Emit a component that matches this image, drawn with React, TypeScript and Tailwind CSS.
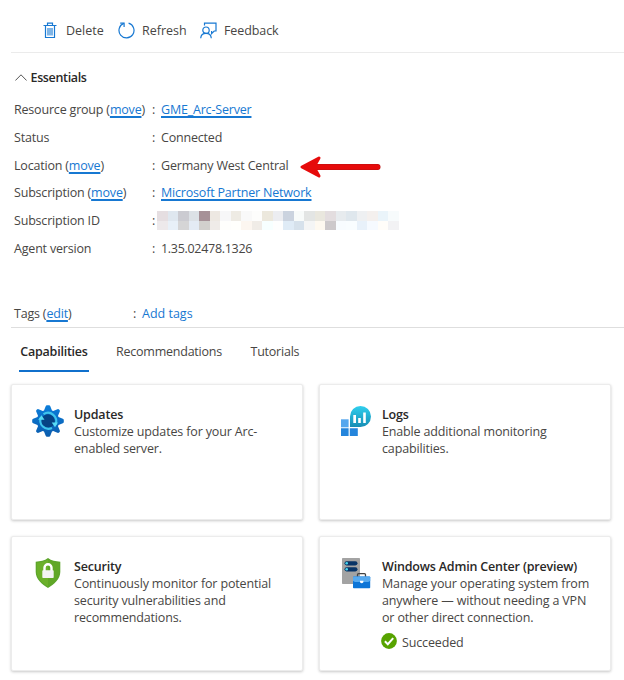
import React from 'react';

const mosaic = [
  ['#e5dee1', '#dfe7ef', '#cbcbd1', '#dce1e6', '#a69197', '#ede8e2', '#f7f7f8', '#eeebe4', '#f9f9f9', '#fdfdfc', '#ece8dd', '#ecedf1', '#cbd3df', '#f8fbfa', '#e3e5e4', '#e9e7de', '#e3dddf', '#e7ebee', '#dfe7ed', '#eef0f2', '#f4f0ee', '#eaf4fa', '#f7fbfc'],
  ['#ede9eb', '#e8f0f8', '#d5d5d6', '#e4ebf4', '#d2d0cd', '#efebe8', '#fefefc', '#fffffc', '#fcf6f0', '#f0ece7', '#f7ffff', '#fefefe', '#dfebf6', '#d6e1eb', '#f4f5f5', '#fef9f0', '#cdc9cb', '#f8fcff', '#f9fdff', '#e8f1fa', '#f6faff', '#fffdf9', '#f2f2f4'],
];

function Link({ children }: { children: React.ReactNode }) {
  return <a className="text-[#1778d2] underline decoration-[1.5px] underline-offset-2 [text-decoration-skip-ink:none]">{children}</a>;
}

interface RowProps {
  label: string;
  action?: string;
  children: React.ReactNode;
}

function Row({ label, action, children }: RowProps) {
  return (
    <div className="flex h-[27.7px] items-center">
      <div className="w-[138px]">
        {label}
        {action && <> (<Link>{action}</Link>)</>}
      </div>
      <div className="w-[9px]">:</div>
      {children}
    </div>
  );
}

function TrashIcon() {
  return (
    <svg width="14" height="17" viewBox="0 0 14 17" fill="none" stroke="#1778d2">
      <path d="M.5 3.5h13M4.5 3V1.2h5V3M2.5 3.5v12h9v-12" strokeWidth="1.2" />
      <path d="M5 6v7.5M7 6v7.5M9 6v7.5" strokeWidth="1.1" />
    </svg>
  );
}

function RefreshIcon() {
  return (
    <svg width="17" height="17" viewBox="0 0 17 17" fill="none" stroke="#1778d2" strokeWidth="1.2">
      <path d="M10.6 1.2A7.5 7.5 0 1 1 5.8 1.4" />
      <path d="M2.2 1.2h3.900v3.900" />
    </svg>
  );
}

function FeedbackIcon() {
  return (
    <svg width="18" height="17" viewBox="0 0 18 17" fill="none" stroke="#1778d2" strokeWidth="1.2">
      <path d="M4.500 3.500V1.200h11.500v7.800h-1.800l-2.600 2.600V9" />
      <circle cx="6" cy="8.200" r="3.200" />
      <path d="M.7 16.300c.2-3.100 2.300-4.900 5.300-4.900s5.100 1.800 5.300 4.900" />
    </svg>
  );
}

function UpdatesIcon() {
  return (
    <svg width="32" height="32" viewBox="0 0 32 32">
      <defs>
        <linearGradient id="gear" x1="0" y1="0" x2="0" y2="32" gradientUnits="userSpaceOnUse">
          <stop offset="0" stopColor="#0c7edb" />
          <stop offset="1" stopColor="#0b5cad" />
        </linearGradient>
      </defs>
      <path
        fill="url(#gear)"
        d="M12 5.500l1.700-4.300Q14 .2 15 .2h2q1 0 1.300 1L20 5.500l1.200.5 4.200-1.800q1-.4 1.700.3l.4.400q.7.700.3 1.700L26 10.800l.5 1.200 4.300 1.700q1 .3 1 1.300v2q0 1-1 1.300L26.500 20l-.5 1.200 1.800 4.200q.4 1-.3 1.700l-.4.400q-.7.700-1.700.3L21.200 26l-1.200.5-1.700 4.300q-.3 1-1.300 1h-2q-1 0-1.300-1L12 26.500l-1.200-.5-4.200 1.800q-1 .4-1.700-.3l-.4-.4q-.7-.7-.3-1.700L6 21.200 5.500 20l-4.300-1.700q-1-.3-1-1.300v-2q0-1 1-1.300L5.500 12l.5-1.200-1.800-4.200q-.4-1 .3-1.700l.4-.4q.7-.7 1.700-.3L10.800 6z"
      />
      <circle cx="16" cy="16" r="6.800" fill="#064384" />
      <g fill="none" stroke="#3fc5ec" strokeWidth="2.100">
        <path d="M20 23A8.200 8.200 0 0 1 8.900 12.500" />
        <path d="M11.500 9.200A8.200 8.200 0 0 1 23.400 19.500" />
      </g>
      <path d="M6.200 14.800l3.300-4.600 3 4.600zM19.700 17.600l3.300 4.600 3-4.600z" fill="#58dcf5" />
    </svg>
  );
}

function LogsIcon() {
  return (
    <svg width="32" height="32" viewBox="0 0 32 32">
      <defs>
        <linearGradient id="bubble" x1="0" y1="0" x2="0" y2="1">
          <stop offset="0" stopColor="#30cfee" />
          <stop offset="1" stopColor="#168db4" />
        </linearGradient>
      </defs>
      <path d="M1 14.300h7.600v8H1z" fill="#55a7ee" />
      <path d="M1 23.300h7.600V31H1zM9.800 23.300h8V31h-8z" fill="#2485dc" />
      <path d="M10 22V11.500A10.500 10.500 0 1 1 20.500 22z" fill="url(#bubble)" />
      <path d="M13.300 10h2.700v8h-2.700zM18.200 13h2.600v5h-2.600zM23.200 7.500h2.600V18h-2.600z" fill="#fff" />
    </svg>
  );
}

function SecurityIcon() {
  return (
    <svg width="32" height="32" viewBox="0 0 32 32">
      <path d="M16 1c3.500 2.600 7.500 3.400 12.300 3.700V15c0 7-6.300 12.500-12.300 16C10 27.500 3.700 22 3.700 15V4.700C8.500 4.400 12.500 3.600 16 1z" fill="#5ca52b" />
      <path d="M16 2.500c3.200 2.100 6.800 3 11.100 3.300V15c0 6.200-5.500 11.300-11.100 14.600z" fill="#60a726" />
      <path d="M16 2.500C12.800 4.600 9.200 5.500 4.900 5.800V15c0 6.200 5.500 11.300 11.100 14.600z" fill="#6bb02a" />
      <path d="M12.500 14v-3.300a3.500 3.500 0 0 1 7 0V14" fill="none" stroke="#fff" strokeWidth="2.400" />
      <rect x="10.300" y="13.300" width="11.400" height="7.800" rx=".8" fill="#f3f3f3" />
    </svg>
  );
}

function AdminCenterIcon() {
  return (
    <svg width="32" height="32" viewBox="0 0 32 32">
      <rect x="2" y="1" width="18" height="26" rx=".7" fill="#a3a3a3" />
      <rect x="4.500" y="4.200" width="13" height="4.200" rx="2.100" fill="#073366" />
      <rect x="4.500" y="10.200" width="13" height="4.200" rx="2.100" fill="#073366" />
      <circle cx="6.700" cy="6.300" r="1.300" fill="#45d5ee" />
      <circle cx="6.700" cy="12.300" r="1.300" fill="#45d5ee" />
      <path d="M17.500 20v-2.300q0-1 1-1h6q1 0 1 1V20" fill="none" stroke="#444" strokeWidth="1.300" />
      <rect x="13" y="19.500" width="17.200" height="11.700" rx=".8" fill="#0d75d7" />
      <path d="M13 20.300q0-.8.800-.8h15.600q.8 0 .8.800v3q-.5 1.700-2.200 1.700H15.200Q13.500 25 13 23.300z" fill="#56aaf0" />
      <path d="M20 23.800h3.400v1.500q-1.700 1.800-3.400 0z" fill="#fff" />
    </svg>
  );
}

function CheckIcon() {
  return (
    <svg width="16" height="16" viewBox="0 0 16 16">
      <circle cx="8" cy="8" r="7.900" fill="#57a300" />
      <path d="M3.900 8.300l2.900 2.900 5.400-6" fill="none" stroke="#fff" strokeWidth="2" />
    </svg>
  );
}

interface CardProps {
  icon: React.ReactNode;
  title: string;
  lines: string[];
  status?: string;
}

function Card({ icon, title, lines, status }: CardProps) {
  return (
    <div className="flex rounded-[2px] border border-[#ececec] bg-white pt-[21px] pl-5 shadow-[0_1px_3px_rgba(0,0,0,0.22)]">
      <div className="-mt-px w-[42px] shrink-0">{icon}</div>
      <div className="whitespace-nowrap tracking-[-0.15px]">
        <h3 className="leading-[17px] font-semibold tracking-[-0.18px] text-[#292827]">{title}</h3>
        {lines.map((line) => (
          <p key={line} className="leading-[17px]">{line}</p>
        ))}
        {status && (
          <div className="mt-[6px] -ml-px flex h-[18px] items-center gap-[5px]">
            <CheckIcon />
            <span className="pt-[3px]">{status}</span>
          </div>
        )}
      </div>
    </div>
  );
}

function App() {
  return (
    <div className="h-[680px] w-[624px] overflow-hidden bg-white font-['Open_Sans','Noto_Sans',sans-serif] text-[12.5px] leading-[17px] text-[#484644]">
      <div className="ml-[11px] flex h-[53px] items-center border-b border-[#ebebeb] pt-[9px] pl-8">
        <div className="flex w-[75px] items-center gap-[9px]"><TrashIcon />Delete</div>
        <div className="flex w-[82px] items-center gap-[7px]"><RefreshIcon />Refresh</div>
        <div className="flex items-center gap-[6px] tracking-[-0.1px]"><FeedbackIcon />Feedback</div>
      </div>

      <div className="flex h-[43px] items-center gap-1 pt-[5px] pl-[14.5px] font-semibold tracking-[-0.35px] text-[#292827]">
        <svg width="12" height="7" viewBox="0 0 12 7" fill="none" stroke="#555">
          <path d="M.4 6.500L6 .8l5.600 5.700" />
        </svg>
        Essentials
      </div>

      <div className="h-[203px] pl-[14px] whitespace-nowrap tracking-[-0.19px]">
        <Row label="Resource group" action="move"><Link>GME_Arc-Server</Link></Row>
        <Row label="Status">Connected</Row>
        <Row label="Location" action="move">
          <span className="w-[137px]">Germany West Central</span>
          <svg width="84" height="24" viewBox="0 0 84 24" fill="none" className="mt-1">
            <path d="M12 12h67.500" stroke="#b81212" strokeWidth="6" strokeLinecap="round" />
            <path d="M21 3L4 12l17 9-5-9z" stroke="#e60b0b" strokeWidth="3" strokeLinejoin="round" fill="#e60b0b" />
            <path d="M12 12h67.500" stroke="#e60b0b" strokeWidth="5" strokeLinecap="round" />
          </svg>
        </Row>
        <Row label="Subscription" action="move"><Link>Microsoft Partner Network</Link></Row>
        <Row label="Subscription ID">
          <div className="-ml-[4px] w-[242px]">
            {mosaic.map((colors, row) => (
              <div key={row} className={row === 0 ? 'flex h-[10.5px]' : 'flex h-[9px]'}>
                {colors.map((color, i) => (
                  <div key={i} className="flex-1" style={{ backgroundColor: color }} />
                ))}
              </div>
            ))}
          </div>
        </Row>
        <Row label="Agent version"><span className="tracking-[-0.3px]">1.35.02478.1326</span></Row>
      </div>

      <div className="ml-[11px] flex h-[29px] items-center border-b border-[#dedede] pl-[3px]">
        <div className="w-[119px] tracking-[-0.19px]">Tags (<Link>edit</Link>)</div>
        <div className="w-[9px]">:</div>
        <span className="text-[#1778d2]">Add tags</span>
      </div>

      <div className="flex h-[56px] pl-[19px] tracking-[-0.23px]">
        <div className="flex h-[44px] w-[70px] items-center justify-center border-b-2 border-[#1070cc] pt-[4px] font-semibold text-[#292827]">Capabilities</div>
        <div className="ml-[27px] flex h-[44px] w-[134.5px] items-center pt-[2px]">Recommendations</div>
        <div className="flex h-[44px] items-center pt-[2px]">Tutorials</div>
      </div>

      <div className="grid w-[611px] grid-cols-2 grid-rows-[136px_135px] gap-4 pl-[11px]">
        <Card icon={<UpdatesIcon />} title="Updates" lines={['Customize updates for your Arc-', 'enabled server.']} />
        <Card icon={<LogsIcon />} title="Logs" lines={['Enable additional monitoring', 'capabilities.']} />
        <Card
          icon={<SecurityIcon />}
          title="Security"
          lines={['Continuously monitor for potential', 'security vulnerabilities and', 'recommendations.']}
        />
        <Card
          icon={<AdminCenterIcon />}
          title="Windows Admin Center (preview)"
          lines={['Manage your operating system from', 'anywhere — without needing a VPN', 'or other direct connection.']}
          status="Succeeded"
        />
      </div>
    </div>
  );
}

export default App;
